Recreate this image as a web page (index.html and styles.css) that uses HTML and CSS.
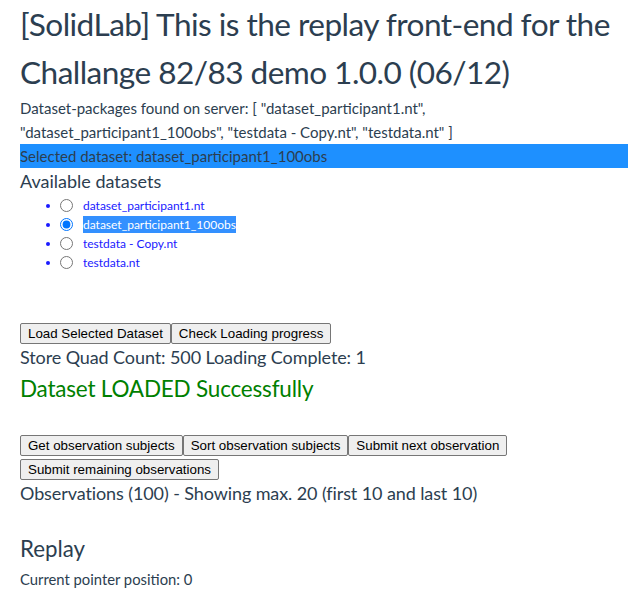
FILE: index.html
```html
<!DOCTYPE html>
<html lang="en">
<head>
<meta charset="utf-8">
<title>SolidLab replay</title>
<link rel="stylesheet" href="styles.css">
</head>
<body>
<div class="page">
  <h1 class="title">[SolidLab] This is the replay front-end for the Challange 82/83 demo 1.0.0 (06/12)</h1>
  <p class="packages">Dataset-packages found on server: [ "dataset_participant1.nt", "dataset_participant1_100obs", "testdata - Copy.nt", "testdata.nt" ]</p>
  <div class="selected-bar">Selected dataset: dataset_participant1_100obs</div>
  <h5 class="section-title">Available datasets</h5>
  <ul class="dataset-list">
    <li><input type="radio" name="ds"><a class="ds-link" href="#">dataset_participant1.nt</a></li>
    <li><input type="radio" name="ds" checked><a class="ds-link active" href="#">dataset_participant1_100obs</a></li>
    <li><input type="radio" name="ds"><a class="ds-link" href="#">testdata - Copy.nt</a></li>
    <li><input type="radio" name="ds"><a class="ds-link" href="#">testdata.nt</a></li>
  </ul>
  <div class="btn-row load-row"><button class="btn">Load Selected Dataset</button><button class="btn">Check Loading progress</button></div>
  <div class="status">Store Quad Count: 500 Loading Complete: 1</div>
  <div class="loaded">Dataset LOADED Successfully</div>
  <div class="btn-row obs-row"><button class="btn">Get observation subjects</button><button class="btn">Sort observation subjects</button><button class="btn">Submit next observation</button><button class="btn">Submit remaining observations</button></div>
  <div class="status obs-count">Observations (100) - Showing max. 20 (first 10 and last 10)</div>
  <h4 class="replay-title">Replay</h4>
  <div class="pointer">Current pointer position: 0</div>
</div>
</body>
</html>
```
FILE: styles.css
```css
html, body {
  margin: 0;
  padding: 0;
  background: #ffffff;
}
.page {
  padding: 0 15px 0 20px;
  font-family: Lato, "Liberation Sans", sans-serif;
  color: #2c3e50;
}
.title {
  margin: 0;
  font-size: 31.6px;
  line-height: 48px;
  font-weight: 400;
  letter-spacing: -0.55px;
}
.packages {
  margin: 0;
  font-size: 15px;
  line-height: 24px;
}
.selected-bar {
  background: #1e90ff;
  font-size: 15px;
  line-height: 24px;
}
.section-title {
  margin: 0;
  padding-top: 1px;
  font-size: 18px;
  line-height: 24px;
  font-weight: 400;
}
.dataset-list {
  margin: 2.5px 0 0;
  padding-left: 41px;
  color: #1a1aff;
  font-size: 12px;
}
.dataset-list li {
  height: 19px;
  line-height: 19px;
}
.dataset-list input {
  margin: 0 3px 0 -1px;
  width: 13px;
  height: 13px;
  vertical-align: -2px;
}
.ds-link {
  color: #1a1aff;
  text-decoration: none;
  margin-left: 7px;
  padding: 1px 0;
}
.ds-link.active {
  background: #3390ff;
  color: #ffffff;
}
.btn-row {
  display: flex;
  flex-wrap: wrap;
  row-gap: 3px;
}
.load-row {
  margin-top: 51px;
}
.obs-row {
  margin-top: 28.5px;
}
.btn {
  font-family: "Liberation Sans", Arial, sans-serif;
  font-size: 13.33px;
  color: #000000;
  background: #efefef;
  border: 1px solid #767676;
  border-radius: 2px;
  padding: 1px 7px;
  height: 21px;
  box-sizing: border-box;
  margin: 0;
  line-height: 17px;
}
.status {
  font-size: 18px;
  line-height: 27px;
  letter-spacing: -0.1px;
}
.loaded {
  font-size: 22.5px;
  line-height: 36px;
  letter-spacing: -0.2px;
  color: #008000;
}
.replay-title {
  margin: 29px 0 0;
  font-size: 22.3px;
  line-height: 26.8px;
  font-weight: 400;
}
.pointer {
  margin-top: 4.4px;
  font-size: 14.8px;
  line-height: 24px;
}
```
